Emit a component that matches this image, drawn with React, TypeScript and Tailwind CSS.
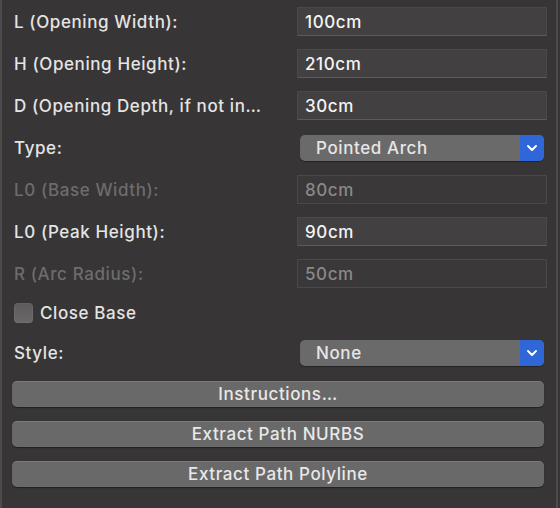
import { ChevronDown } from 'lucide-react';

type Row =
  | { kind: 'input'; label: string; value: string; disabled?: boolean }
  | { kind: 'select'; label: string; value: string };

const rows: Row[] = [
  { kind: 'input', label: 'L (Opening Width):', value: '100cm' },
  { kind: 'input', label: 'H (Opening Height):', value: '210cm' },
  { kind: 'input', label: 'D (Opening Depth, if not in…', value: '30cm' },
  { kind: 'select', label: 'Type:', value: 'Pointed Arch' },
  { kind: 'input', label: 'L0 (Base Width):', value: '80cm', disabled: true },
  { kind: 'input', label: 'L0 (Peak Height):', value: '90cm' },
  { kind: 'input', label: 'R (Arc Radius):', value: '50cm', disabled: true },
];

function Select({ value }: { value: string }) {
  return (
    <div className="mx-[3px] flex h-[26px] items-stretch overflow-hidden rounded-[5px] bg-[#6b6a6a] shadow-[0_1px_1px_rgba(0,0,0,0.35)]">
      <div className="flex flex-1 items-center pl-4 pt-[2px] text-[#e6e6e6]">{value}</div>
      <div className="flex w-6 items-center justify-center bg-[#2f67d9]">
        <ChevronDown className="h-4 w-4 text-white" strokeWidth={3} />
      </div>
    </div>
  );
}

function Field({ value, disabled }: { value: string; disabled?: boolean }) {
  return (
    <div
      className={[
        'flex h-[29px] items-center border border-[#4a4849] px-[7px] pt-[2px]',
        disabled ? 'bg-[#3a3839] text-[#8a8889]' : 'bg-[#424041] border-b-[#5c5a5b] text-[#f4f4f4]',
      ].join(' ')}
    >
      {value}
    </div>
  );
}

function Button({ label }: { label: string }) {
  return (
    <button className="flex h-[26px] w-full items-center justify-center rounded-[5px] border-t border-[#7a7a7a] bg-[#6a6969] pt-[1px] text-[#e8e8e8] shadow-[0_1px_1px_rgba(0,0,0,0.4)]">
      {label}
    </button>
  );
}

export default function App() {
  return (
    <div
      className="flex h-[508px] w-[560px] bg-[#373536] text-[17px] font-medium tracking-[0.6px]"
      style={{ fontFamily: 'Inter, "Noto Sans", sans-serif' }}
    >
      <div className="w-[2px] bg-[#4d4b4c]" />
      <div className="flex flex-1 flex-col pl-[10px] pt-[7px]">
        <div className="flex flex-col gap-[13px] pr-[11px]">
          {rows.map((row) => (
            <div key={row.label} className="flex h-[29px] items-center">
              <div
                className={[
                  'flex-1 pl-[2px] pt-[2px]',
                  row.kind === 'input' && row.disabled ? 'text-[#6e6c6d]' : 'text-[#e4e4e4]',
                ].join(' ')}
              >
                {row.label}
              </div>
              <div className="w-[250px]">
                {row.kind === 'select' ? (
                  <Select value={row.value} />
                ) : (
                  <Field value={row.value} disabled={row.disabled} />
                )}
              </div>
            </div>
          ))}
        </div>

        <div className="mt-[10px] flex h-[29px] items-center gap-[7px] pl-[2px] text-[#e4e4e4]">
          <div className="h-[20px] w-[19px] rounded-[4px] bg-gradient-to-b from-[#5c5a5b] to-[#6a6869] shadow-[inset_0_0_0_1px_rgba(255,255,255,0.05)]" />
          <span className="pt-[2px]">Close Base</span>
        </div>

        <div className="mt-[11px] flex h-[29px] items-center pr-[11px]">
          <div className="flex-1 pl-[2px] pt-[2px] text-[#e4e4e4]">Style:</div>
          <div className="w-[250px]">
            <Select value="None" />
          </div>
        </div>

        <div className="mt-[14px] flex flex-col gap-[14px] pr-[14px]">
          <Button label="Instructions…" />
          <Button label="Extract Path NURBS" />
          <Button label="Extract Path Polyline" />
        </div>
      </div>
      <div className="ml-[-2px] w-[2px] bg-[#4d4b4c]" />
      <div className="w-[2px]" />
    </div>
  );
}
